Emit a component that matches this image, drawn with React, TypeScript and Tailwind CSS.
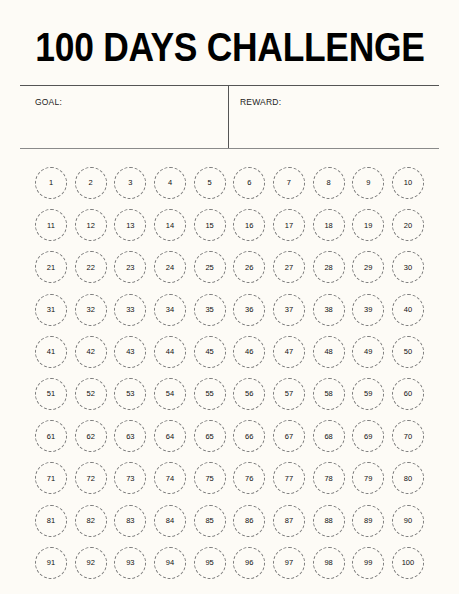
const days = Array.from({ length: 100 }, (_, i) => i + 1);

export default function App() {
  return (
    <div className="w-[459px] h-[594px] bg-[#fdfbf6] overflow-hidden font-['Liberation_Sans',Arial,sans-serif] text-black">
      {/* Title */}
      <div className="pt-[24px] h-[85px] flex justify-center">
        <h1 className="inline-block whitespace-nowrap scale-x-[0.885] text-[40px] leading-[46px] font-bold tracking-[-0.3px]">
          100 DAYS CHALLENGE
        </h1>
      </div>

      {/* Goal / reward box */}
      <div className="mx-[20px] grid grid-cols-[209px_1fr] h-[64px] border-t border-b border-t-[#555] border-b-[#8a8a8a]">
        <div className="border-r border-[#555] pl-[15px] pt-[10px] text-[8.5px] tracking-[0.2px] text-[#222]">GOAL:</div>
        <div className="pl-[11px] pt-[10px] text-[8.5px] tracking-[0.2px] text-[#222]">REWARD:</div>
      </div>

      {/* Day circles */}
      <div className="ml-[35px] mt-[18px] w-[389px] grid grid-cols-[repeat(10,32px)] justify-between gap-y-[10.2px]">
        {days.map((d) => (
          <div
            key={d}
            className="w-[32px] h-[32px] rounded-full border border-dashed border-[#7a7a7a] flex items-center justify-center text-[7.5px] text-[#111]"
          >
            {d}
          </div>
        ))}
      </div>
    </div>
  );
}
